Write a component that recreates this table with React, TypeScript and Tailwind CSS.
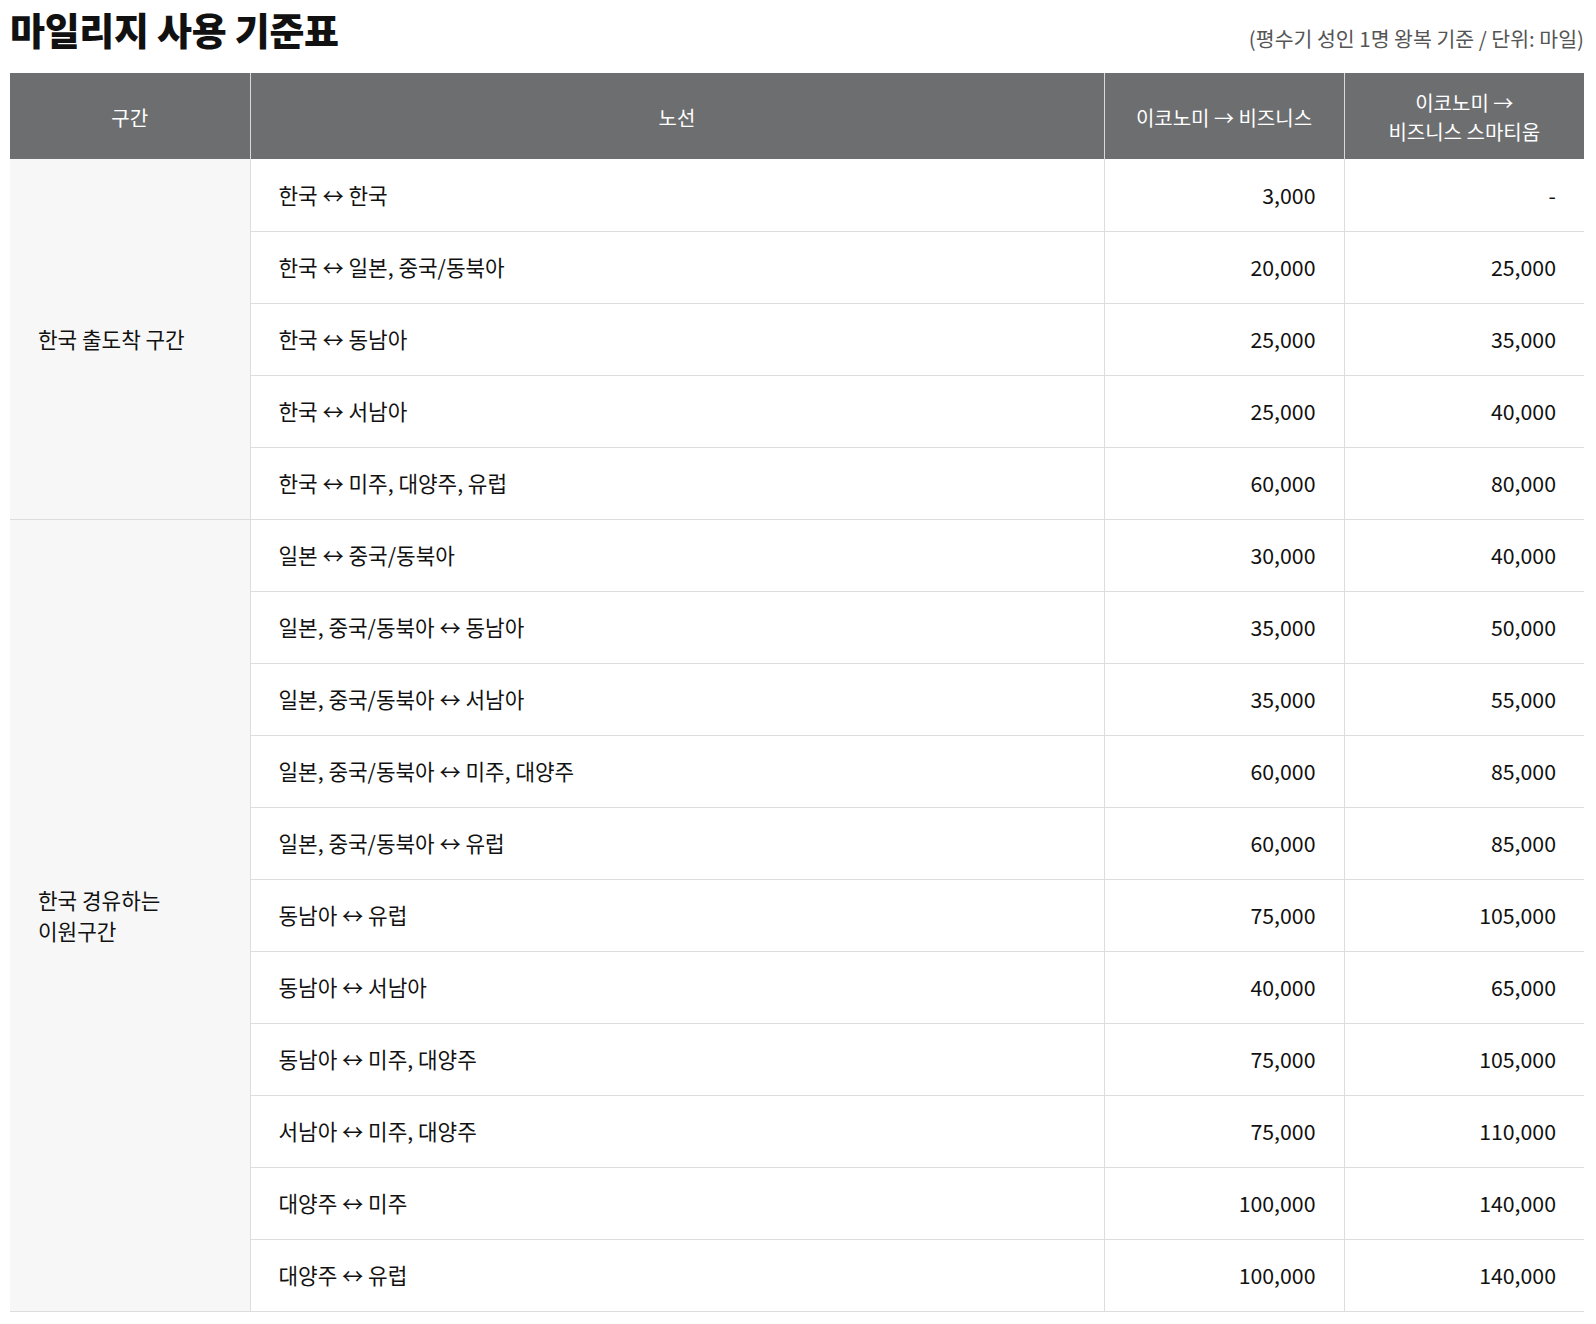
import React from 'react';

// 마일리지 사용 기준표 - award chart table
const font = { fontFamily: '"Noto Sans CJK KR", "Noto Sans", sans-serif' };

const groups = [
  {
    name: ['한국 출도착 구간'],
    rows: [
      ['한국 ↔ 한국', '3,000', '-'],
      ['한국 ↔ 일본, 중국/동북아', '20,000', '25,000'],
      ['한국 ↔ 동남아', '25,000', '35,000'],
      ['한국 ↔ 서남아', '25,000', '40,000'],
      ['한국 ↔ 미주, 대양주, 유럽', '60,000', '80,000'],
    ],
  },
  {
    name: ['한국 경유하는', '이원구간'],
    rows: [
      ['일본 ↔ 중국/동북아', '30,000', '40,000'],
      ['일본, 중국/동북아 ↔ 동남아', '35,000', '50,000'],
      ['일본, 중국/동북아 ↔ 서남아', '35,000', '55,000'],
      ['일본, 중국/동북아 ↔ 미주, 대양주', '60,000', '85,000'],
      ['일본, 중국/동북아 ↔ 유럽', '60,000', '85,000'],
      ['동남아 ↔ 유럽', '75,000', '105,000'],
      ['동남아 ↔ 서남아', '40,000', '65,000'],
      ['동남아 ↔ 미주, 대양주', '75,000', '105,000'],
      ['서남아 ↔ 미주, 대양주', '75,000', '110,000'],
      ['대양주 ↔ 미주', '100,000', '140,000'],
      ['대양주 ↔ 유럽', '100,000', '140,000'],
    ],
  },
];

const App: React.FC = () => {
  return (
    <div className="bg-white min-h-screen px-[10px] text-[#111]" style={font}>
      {/* Title */}
      <div className="flex items-end justify-between h-[73px] pb-[22px]">
        <h1 className="text-[38px] font-extrabold leading-none tracking-[-0.3px] mb-[3px]">마일리지 사용 기준표</h1>
        <p className="text-[20.5px] text-[#555] leading-none pr-[2px] pb-[3px]">(평수기 성인 1명 왕복 기준 / 단위: 마일)</p>
      </div>

      {/* Table */}
      <table className="w-[1574px] border-collapse table-fixed text-[21.3px]">
        <colgroup>
          <col className="w-[240px]" />
          <col className="w-[854px]" />
          <col className="w-[240px]" />
          <col className="w-[240px]" />
        </colgroup>
        <thead>
          <tr className="bg-[#6d6e70] text-white text-[20px] h-[86px]">
            <th className="font-normal border-r border-[#d9d9d9] pt-[3px]">구간</th>
            <th className="font-normal border-r border-[#d9d9d9] pt-[3px]">노선</th>
            <th className="font-normal border-r border-[#d9d9d9] pt-[3px]">이코노미 → 비즈니스</th>
            <th className="font-normal leading-[29px] pt-[2px]">
              이코노미 →<br />비즈니스 스마티움
            </th>
          </tr>
        </thead>
        <tbody>
          {groups.map((g) =>
            g.rows.map((r, i) => (
              <tr key={r[0]} className="h-[72px] border-b border-[#dddddd]">
                {i === 0 && (
                  <td
                    rowSpan={g.rows.length}
                    className="bg-[#f7f7f7] border-r border-b border-[#dddddd] px-[28px] align-middle leading-[31px]"
                  >
                    {g.name.map((n) => (
                      <div key={n}>{n}</div>
                    ))}
                  </td>
                )}
                <td className="px-[28px] border-r border-[#dddddd]">{r[0]}</td>
                <td className="px-[28px] text-right border-r border-[#dddddd]">{r[1]}</td>
                <td className="px-[28px] text-right">{r[2]}</td>
              </tr>
            ))
          )}
        </tbody>
      </table>
    </div>
  );
};

export default App;
